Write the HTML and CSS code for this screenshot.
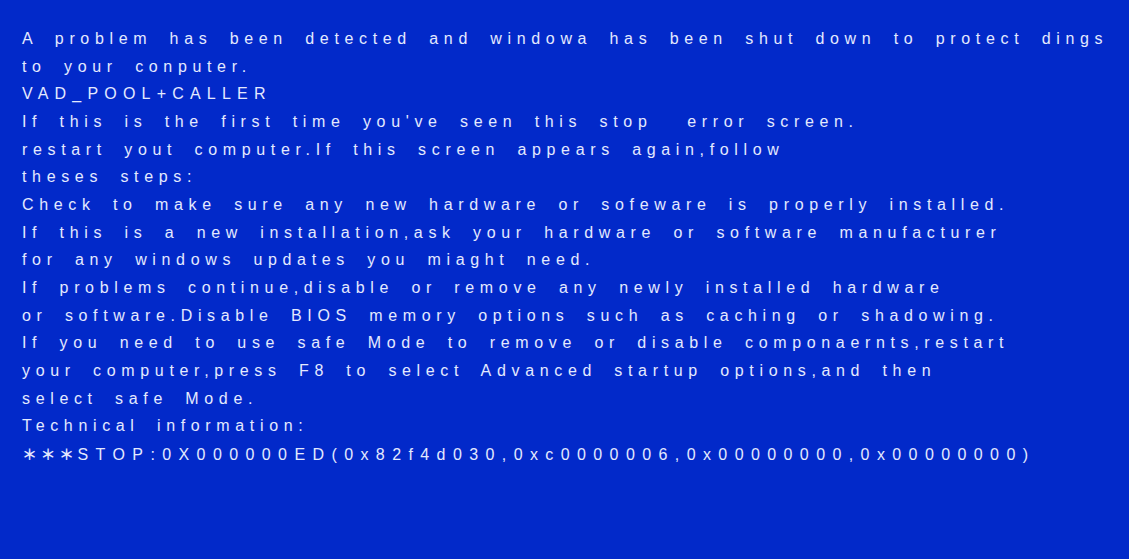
FILE: index.html
```html
<!DOCTYPE html>
<html>
<head>
<meta charset="utf-8">
<link rel="stylesheet" href="styles.css">
</head>
<body>
<main class="screen">
<p class="line">A problem has been detected and windowa has been shut down to protect dings</p>
<p class="line">to your conputer.</p>
<p class="line caps">VAD_POOL+CALLER</p>
<p class="line">If this is the first time you've seen this stop  error screen.</p>
<p class="line">restart yout computer.If this screen appears again,follow</p>
<p class="line">theses steps:</p>
<p class="line">Check to make sure any new hardware or sofeware is properly installed.</p>
<p class="line">If this is a new installation,ask your hardware or software manufacturer</p>
<p class="line">for any windows updates you miaght need.</p>
<p class="line">If problems continue,disable or remove any newly installed hardware</p>
<p class="line">or software.Disable BIOS memory options such as caching or shadowing.</p>
<p class="line">If you need to use safe Mode to remove or disable componaernts,restart</p>
<p class="line">your computer,press F8 to select Advanced startup options,and then</p>
<p class="line">select safe Mode.</p>
<p class="line">Technical information:</p>
<p class="line code"><span class="star">＊＊＊</span>STOP:0X000000ED(0x82f4d030,0xc0000006,0x00000000,0x00000000)</p>
</main>
</body>
</html>
```
FILE: styles.css
```css
html, body {
  margin: 0;
  padding: 0;
  background: #0229c9;
}
.screen {
  width: 1129px;
  height: 559px;
  box-sizing: border-box;
  padding: 25px 0 0 22px;
  background: #0229c9;
  color: #e4e9ff;
  font-family: "Liberation Sans", Arial, sans-serif;
  font-size: 16px;
  letter-spacing: 5.65px;
  word-spacing: 7.3px;
}
.line {
  margin: 0;
  line-height: 27.67px;
  white-space: pre;
}
.caps {
  letter-spacing: 6.2px;
}
.code {
  letter-spacing: 7.4px;
}
.star {
  font-family: "Noto Sans CJK SC", sans-serif;
  font-size: 15px;
  font-weight: 700;
  letter-spacing: 3.5px;
}
```
